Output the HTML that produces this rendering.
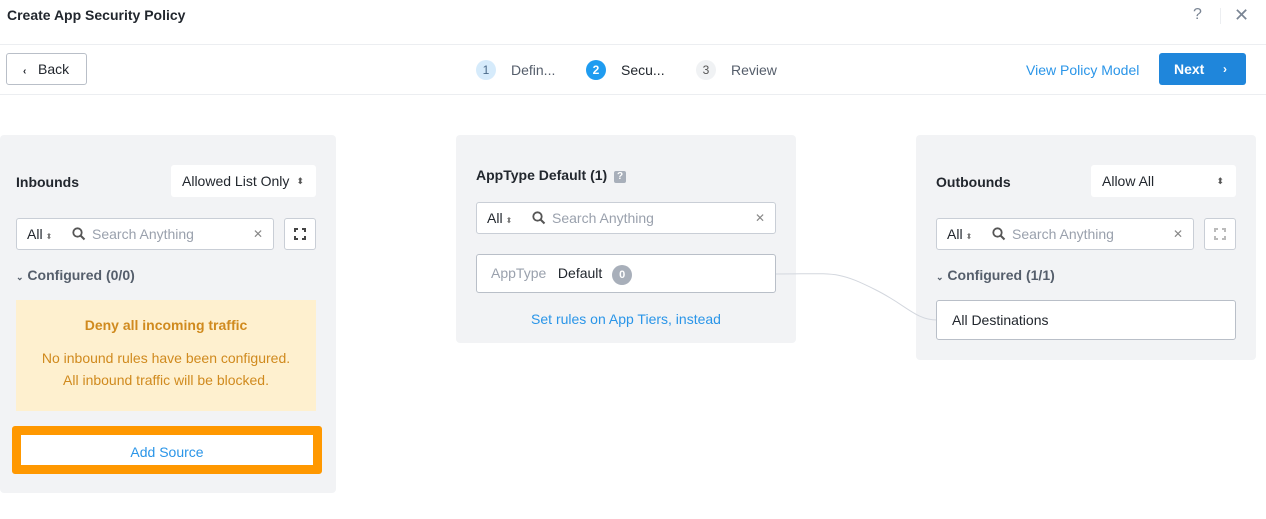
<!DOCTYPE html>
<html><head><meta charset="utf-8"><style>
*{box-sizing:border-box;margin:0;padding:0}
body{width:1266px;height:519px;background:#fff;font-family:"Liberation Sans",sans-serif;font-size:14px;color:#22272e;position:relative;overflow:hidden}
.a{position:absolute}
.panel{position:absolute;background:#f2f3f5;border-radius:4px}
.sel{position:absolute;background:#fff;border-radius:3px;height:32px;line-height:32px;padding-left:11px;font-size:14px}
.sel .ar{position:absolute;right:12px;top:0;font-size:9px;color:#555;line-height:32px}
.search{position:absolute;background:#fff;border:1px solid #c9ced6;border-radius:3px;height:32px;line-height:30px;font-size:14px}
.search .all{position:absolute;left:10px}
.search .ud{font-size:8px;color:#777;margin-left:3px}
.search .ph{position:absolute;left:75px;color:#9aa1ad}
.search .x{position:absolute;right:10px;color:#888;font-size:12px}
.search svg{position:absolute;left:55px;top:8px}
.fs{position:absolute;width:32px;height:32px;border:1px solid #c9ced6;border-radius:3px;background:#fff}
.blue{color:#2a95e8}
.step{position:absolute;top:60px;width:20px;height:20px;border-radius:50%;text-align:center;line-height:20px;font-size:12px}
</style></head><body>
<div class="a" style="left:7px;top:7px;font-weight:bold;font-size:14px">Create App Security Policy</div>
<div class="a" style="left:1193px;top:6px;color:#7a8594;font-size:16px">?</div>
<div class="a" style="left:1220px;top:8px;width:1px;height:16px;background:#eceef1"></div>
<div class="a" style="left:1234px;top:5px;color:#7a8594;font-size:18px">✕</div>
<div class="a" style="left:0;top:44px;width:1266px;height:1px;background:#eceef1"></div>
<div class="a" style="left:0;top:94px;width:1266px;height:1px;background:#eceef1"></div>
<div class="a" style="left:6px;top:53px;width:81px;height:32px;border:1px solid #b9bfc8;border-radius:3px;line-height:30px;padding-left:16px;font-size:14px"><span style="font-size:10px;font-weight:bold">‹</span>&nbsp;&nbsp;&nbsp;Back</div>
<div class="step" style="left:476px;background:#d6ebfb;color:#4a6a8a">1</div>
<div class="a" style="left:511px;top:62px;color:#555e6b">Defin...</div>
<div class="step" style="left:586px;background:#1f9cf0;color:#fff;font-weight:bold">2</div>
<div class="a" style="left:621px;top:62px;color:#22272e">Secu...</div>
<div class="step" style="left:696px;background:#f0f2f4;color:#555">3</div>
<div class="a" style="left:731px;top:62px;color:#555e6b">Review</div>
<div class="a blue" style="left:1026px;top:62px">View Policy Model</div>
<div class="a" style="left:1159px;top:53px;width:87px;height:32px;background:#1f86db;border-radius:3px;color:#fff;line-height:32px;padding-left:15px;font-weight:bold">Next<span style="position:absolute;right:19px;font-size:12px">›</span></div>

<div class="panel" style="left:0;top:135px;width:336px;height:358px"></div>
<div class="a" style="left:16px;top:174px;font-weight:bold">Inbounds</div>
<div class="sel" style="left:171px;top:165px;width:145px">Allowed List Only<span class="ar">⬍</span></div>
<div class="search" style="left:16px;top:218px;width:258px"><span class="all">All<span class="ud">⬍</span></span><svg width="14" height="14" viewBox="0 0 14 14"><circle cx="5.5" cy="5.5" r="4.2" fill="none" stroke="#555" stroke-width="1.8"/><path d="M8.5 8.5L12.5 12.5" stroke="#555" stroke-width="2"/></svg><span class="ph">Search Anything</span><span class="x">✕</span></div>
<div class="fs" style="left:284px;top:218px"><svg width="30" height="30" viewBox="0 0 30 30"><path d="M10 13v-3h3M17 10h3v3M20 17v3h-3M13 20h-3v-3" fill="none" stroke="#444" stroke-width="2"/></svg></div>
<div class="a" style="left:16px;top:267px;color:#555e6b;font-weight:bold"><span style="font-size:9px">⌄</span> Configured (0/0)</div>
<div class="a" style="left:16px;top:300px;width:300px;height:111px;background:#fef0cf;color:#d08a1e;text-align:center">
<div style="margin-top:17px;font-weight:bold">Deny all incoming traffic</div>
<div style="margin-top:14px;line-height:22px">No inbound rules have been configured.<br>All inbound traffic will be blocked.</div></div>
<div class="a" style="left:12px;top:426px;width:310px;height:48px;border:9px solid #ff9800;border-radius:3px;background:#fff;text-align:center;line-height:34px" ><span class="blue">Add Source</span></div>

<div class="panel" style="left:456px;top:135px;width:340px;height:208px"></div>
<div class="a" style="left:476px;top:167px;font-weight:bold">AppType Default (1) <span style="display:inline-block;width:12px;height:12px;background:#a8afba;color:#fff;font-size:10px;text-align:center;line-height:12px;border-radius:2px;vertical-align:1px;margin-left:3px">?</span></div>
<div class="search" style="left:476px;top:202px;width:300px"><span class="all">All<span class="ud">⬍</span></span><svg width="14" height="14" viewBox="0 0 14 14"><circle cx="5.5" cy="5.5" r="4.2" fill="none" stroke="#555" stroke-width="1.8"/><path d="M8.5 8.5L12.5 12.5" stroke="#555" stroke-width="2"/></svg><span class="ph">Search Anything</span><span class="x">✕</span></div>
<div class="a" style="left:476px;top:254px;width:300px;height:39px;background:#fff;border:1px solid #b9bfc8;border-radius:3px;line-height:37px;padding-left:14px"><span style="color:#9aa1ad">AppType</span>&nbsp;&nbsp; Default <span style="display:inline-block;width:20px;height:20px;border-radius:50%;background:#a8afba;color:#fff;font-size:11px;text-align:center;line-height:20px;margin-left:6px;font-weight:bold">0</span></div>
<div class="a blue" style="left:456px;width:340px;text-align:center;top:311px">Set rules on App Tiers, instead</div>

<div class="panel" style="left:916px;top:135px;width:340px;height:225px"></div>
<svg class="a" style="left:776px;top:260px;z-index:2" width="162" height="70"><path d="M0 14 C60 14 60 10 100 30 C130 45 140 60 161 60" fill="none" stroke="#d3d7de" stroke-width="1"/></svg>
<div class="a" style="left:936px;top:174px;font-weight:bold">Outbounds</div>
<div class="sel" style="left:1091px;top:165px;width:145px">Allow All<span class="ar">⬍</span></div>
<div class="search" style="left:936px;top:218px;width:258px"><span class="all">All<span class="ud">⬍</span></span><svg width="14" height="14" viewBox="0 0 14 14"><circle cx="5.5" cy="5.5" r="4.2" fill="none" stroke="#555" stroke-width="1.8"/><path d="M8.5 8.5L12.5 12.5" stroke="#555" stroke-width="2"/></svg><span class="ph">Search Anything</span><span class="x">✕</span></div>
<div class="fs" style="left:1204px;top:218px"><svg width="30" height="30" viewBox="0 0 30 30"><path d="M10 13v-3h3M17 10h3v3M20 17v3h-3M13 20h-3v-3" fill="none" stroke="#bbb" stroke-width="2"/></svg></div>
<div class="a" style="left:936px;top:267px;color:#555e6b;font-weight:bold"><span style="font-size:9px">⌄</span> Configured (1/1)</div>
<div class="a" style="left:936px;top:300px;width:300px;height:40px;background:#fff;border:1px solid #b9bfc8;border-radius:3px;line-height:38px;padding-left:15px;z-index:3">All Destinations</div>
</body></html>
